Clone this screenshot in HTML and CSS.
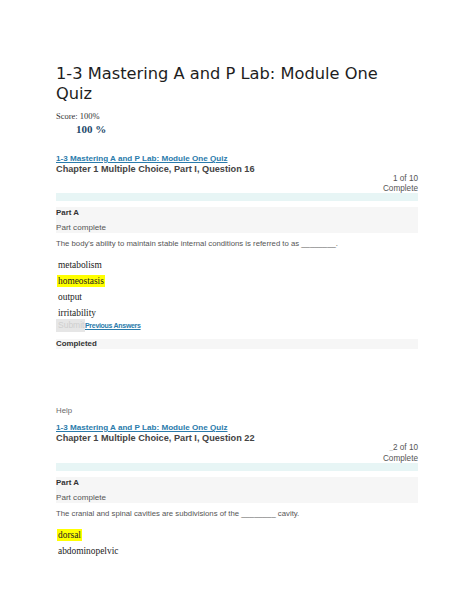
FILE: index.html
```html
<!DOCTYPE html>
<html>
<head>
<meta charset="utf-8">
<link rel="stylesheet" href="styles.css">
</head>
<body>
<div class="page">
  <h1 class="title">1-3 Mastering A and P Lab: Module One Quiz</h1>
  <div class="score">Score: 100%</div>
  <div class="score-big">100 %</div>

  <section class="item">
    <a class="quiz-link" href="#">1-3 Mastering A and P Lab: Module One Quiz</a>
    <div class="chapter">Chapter 1 Multiple Choice, Part I, Question 16</div>
    <div class="counter"><div>1 of 10</div><div>Complete</div></div>
    <div class="band"></div>
    <div class="part-box">
      <div class="part-name">Part A</div>
      <div class="part-status">Part complete</div>
    </div>
    <div class="question">The body's ability to maintain stable internal conditions is referred to as ________.</div>
    <ul class="options">
      <li><span class="opt">metabolism</span></li>
      <li><span class="opt hl">homeostasis</span></li>
      <li><span class="opt">output</span></li>
      <li><span class="opt">irritability</span></li>
    </ul>
    <div class="submit-row">
      <span class="submit">Submit</span><a class="prev" href="#">Previous Answers</a>
    </div>
    <div class="completed">Completed</div>
  </section>

  <div class="help">Help</div>

  <section class="item">
    <a class="quiz-link" href="#">1-3 Mastering A and P Lab: Module One Quiz</a>
    <div class="chapter">Chapter 1 Multiple Choice, Part I, Question 22</div>
    <div class="counter"><div><span class="tick">_</span>2 of 10</div><div>Complete</div></div>
    <div class="band"></div>
    <div class="part-box">
      <div class="part-name">Part A</div>
      <div class="part-status">Part complete</div>
    </div>
    <div class="question">The cranial and spinal cavities are subdivisions of the ________ cavity.</div>
    <ul class="options">
      <li><span class="opt hl">dorsal</span></li>
      <li><span class="opt">abdominopelvic</span></li>
    </ul>
  </section>
</div>
</body>
</html>
```

FILE: styles.css
```css
html, body {
  margin: 0;
  padding: 0;
  background: #ffffff;
}

.page {
  margin-left: 56px;
  width: 362px;
  font-family: "Liberation Sans", Arial, sans-serif;
  color: #444;
}

.title {
  margin: 64px 0 0 0;
  width: 350px;
  font-family: "DejaVu Sans", sans-serif;
  font-weight: normal;
  font-size: 16.25px;
  line-height: 20px;
  color: #1e1e1e;
}

.score {
  margin-top: 7px;
  font-family: "Liberation Serif", serif;
  font-size: 8.5px;
  line-height: 10px;
  color: #333;
}

.score-big {
  margin-top: 2px;
  margin-left: 20px;
  font-family: "Liberation Serif", serif;
  font-weight: bold;
  font-size: 11px;
  line-height: 12px;
  color: #1d4a6a;
}

.item {
  margin-top: 19px;
}

.quiz-link {
  display: block;
  font-weight: bold;
  font-size: 8.1px;
  line-height: 10px;
  color: #2a7bab;
  text-decoration: underline;
}

.chapter {
  font-weight: bold;
  font-size: 9.2px;
  line-height: 10px;
  color: #444;
}

.counter {
  text-align: right;
  font-size: 8.2px;
  line-height: 9.5px;
  color: #555;
}

.tick {
  font-size: 6px;
  color: #888;
}

.band {
  height: 8px;
  background: #e7f5f5;
}

.part-box {
  margin-top: 6px;
  height: 26px;
  background: #f6f6f6;
}

.part-name {
  font-weight: bold;
  font-size: 7.9px;
  line-height: 11px;
  color: #333;
}

.part-status {
  margin-top: 4px;
  font-size: 8.1px;
  line-height: 11px;
  color: #555;
}

.question {
  margin-top: 6px;
  font-size: 7.75px;
  line-height: 10px;
  color: #555;
}

.options {
  list-style: none;
  margin: 6px 0 0 0;
  padding: 0 0 0 1px;
}

.options li {
  height: 16px;
  line-height: 16px;
}

.opt {
  font-family: "Liberation Serif", serif;
  font-size: 9.4px;
  color: #222;
  padding: 1px 1px;
}

.opt.hl {
  background: #ffff00;
}

.submit-row {
  display: flex;
  align-items: center;
  height: 13px;
}

.submit {
  width: 29px;
  height: 13px;
  overflow: hidden;
  white-space: nowrap;
  background: #e6e6e6;
  color: #cfcfcf;
  font-size: 8.5px;
  line-height: 13px;
  padding-left: 2px;
  box-sizing: border-box;
}

.prev {
  font-weight: bold;
  font-size: 7px;
  letter-spacing: -0.3px;
  color: #2a7bab;
  text-decoration: underline;
  line-height: 13px;
}

.completed {
  margin-top: 7px;
  height: 10px;
  background: #f6f6f6;
  font-weight: bold;
  font-size: 7.9px;
  line-height: 10px;
  color: #333;
}

.help {
  margin-top: 57px;
  font-size: 7.8px;
  line-height: 10px;
  color: #6a6a6a;
}

.item + .help + .item {
  margin-top: 7px;
}
```
